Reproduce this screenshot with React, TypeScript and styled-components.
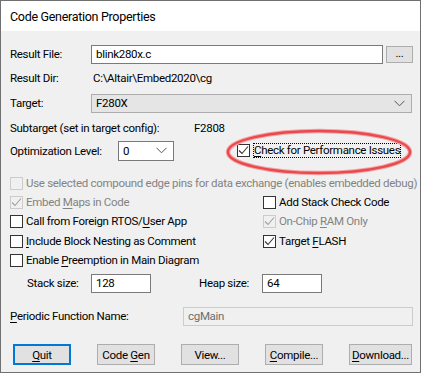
import React from "react";
import styled, { createGlobalStyle } from "styled-components";

const Global = createGlobalStyle`
  html, body { margin: 0; padding: 0; background: #3c3c3c; }
  body {
    font-family: "Roboto", "Segoe UI", sans-serif;
    font-size: 11.5px;
    letter-spacing: -0.3px;
    color: #000;
  }
  * { box-sizing: border-box; }
`;

const Window = styled.div`
  position: relative;
  width: 421px;
  height: 373px;
  border: 1px solid #707070;
  background: #f0f0f0;
  display: flex;
  flex-direction: column;
  overflow: hidden;
`;

const TitleBar = styled.div`
  height: 30px;
  background: #fff;
  display: flex;
  align-items: center;
  padding-left: 9px;
  font-size: 12.5px;
  letter-spacing: -0.3px;
`;

const Body = styled.div`
  display: flex;
  flex-direction: column;
  padding-left: 9px;
`;

const Row = styled.div<{ $mt: number; $h: number }>`
  display: flex;
  align-items: center;
  margin-top: ${(p) => p.$mt}px;
  height: ${(p) => p.$h}px;
  white-space: nowrap;
`;

const Label = styled.span<{ $w?: number; $indent?: number; $disabled?: boolean }>`
  flex: none;
  width: ${(p) => (p.$w ? `${p.$w}px` : "auto")};
  padding-left: ${(p) => p.$indent ?? 0}px;
  color: ${(p) => (p.$disabled ? "#838383" : "#000")};
`;

const TextBox = styled.div<{ $w: number; $disabled?: boolean }>`
  flex: none;
  width: ${(p) => p.$w}px;
  height: 19px;
  border: 1px solid ${(p) => (p.$disabled ? "#cccccc" : "#7a7a7a")};
  background: ${(p) => (p.$disabled ? "#f0f0f0" : "#fff")};
  color: ${(p) => (p.$disabled ? "#6d6d6d" : "#000")};
  display: flex;
  align-items: center;
  padding-left: 4px;
`;

const SmallButton = styled.div`
  flex: none;
  width: 27px;
  height: 17px;
  margin-left: 3px;
  border: 1px solid #adadad;
  background: #e1e1e1;
  display: flex;
  align-items: center;
  justify-content: center;
  padding-bottom: 3px;
`;

const Combo = styled.div<{ $w: number; $editable?: boolean }>`
  flex: none;
  width: ${(p) => p.$w}px;
  height: ${(p) => (p.$editable ? 20 : 19)}px;
  border: 1px solid ${(p) => (p.$editable ? "#7a7a7a" : "#adadad")};
  background: ${(p) => (p.$editable ? "#fff" : "#e5e5e5")};
  display: flex;
  align-items: center;
  justify-content: space-between;
  padding: 0 6px 0 4px;
`;

const Chevron = () => (
  <svg width="11" height="7" viewBox="0 0 11 7">
    <path d="M0.5 0.8 L5.5 5.8 L10.5 0.8" fill="none" stroke="#555" strokeWidth="1" />
  </svg>
);

const Grid = styled.div`
  display: grid;
  grid-template-columns: 253px 1fr;
  grid-template-rows: 20px 19px 19px 20px 19px;
  margin-top: 12px;
  white-space: nowrap;
`;

const Cell = styled.div<{ $span?: boolean }>`
  display: flex;
  align-items: center;
  grid-column: ${(p) => (p.$span ? "1 / span 2" : "auto")};
`;

const Box = styled.span<{ $disabled?: boolean }>`
  flex: none;
  width: 13px;
  height: 13px;
  border: 1px solid ${(p) => (p.$disabled ? "#cccccc" : "#333333")};
  background: ${(p) => (p.$disabled ? "#f0f0f0" : "#fff")};
  display: flex;
  align-items: center;
  justify-content: center;
  margin-right: 3px;
`;

const CheckText = styled.span<{ $disabled?: boolean; $focus?: boolean }>`
  color: ${(p) => (p.$disabled ? "#838383" : "#000")};
  outline: ${(p) => (p.$focus ? "1px dotted #000" : "none")};
  outline-offset: -1px;
  padding: ${(p) => (p.$focus ? "0 1px" : "0")};
  line-height: 15px;
`;

const U = styled.span`
  text-decoration: underline;
  text-underline-offset: 2px;
  text-decoration-thickness: 1px;
`;

const Check: React.FC<{
  checked?: boolean;
  disabled?: boolean;
  focus?: boolean;
  children: React.ReactNode;
}> = ({ checked, disabled, focus, children }) => (
  <>
    <Box $disabled={disabled}>
      {checked && (
        <svg width="11" height="11" viewBox="0 0 11 11">
          <path
            d="M1 5.5 L4 8.5 L10 1.5"
            fill="none"
            stroke={disabled ? "#a0a0a0" : "#333"}
            strokeWidth="1.1"
          />
        </svg>
      )}
    </Box>
    <CheckText $disabled={disabled} $focus={focus}>
      {children}
    </CheckText>
  </>
);

const Spacer = styled.span<{ $w: number }>`
  flex: none;
  width: ${(p) => p.$w}px;
`;

const ButtonRow = styled.div`
  display: flex;
  align-items: center;
  margin-top: 18px;
  height: 21px;
  padding-left: 3px;
  gap: 26px;
`;

const Button = styled.div<{ $w?: number; $default?: boolean }>`
  flex: none;
  width: ${(p) => p.$w ?? 58}px;
  height: 21px;
  border: ${(p) => (p.$default ? "2px solid #0078d7" : "1px solid #adadad")};
  background: #e1e1e1;
  display: flex;
  align-items: center;
  justify-content: center;
  white-space: pre;
`;

const Annotation = styled.svg`
  position: absolute;
  left: 224px;
  top: 126px;
  pointer-events: none;
`;

export default function App() {
  return (
    <>
      <Global />
      <Window>
        <TitleBar>Code Generation Properties</TitleBar>
        <Body>
          <Row $mt={13} $h={20}>
            <Label $w={81}>Result File:</Label>
            <TextBox $w={292}>blink280x.c</TextBox>
            <SmallButton>...</SmallButton>
          </Row>
          <Row $mt={6} $h={16}>
            <Label $w={83}>Result Dir:</Label>
            <span>C:\Altair\Embed2020\cg</span>
          </Row>
          <Row $mt={7} $h={20}>
            <Label $w={81}>Target:</Label>
            <Combo $w={321}>
              <span>F280X</span>
              <Chevron />
            </Combo>
          </Row>
          <Row $mt={7} $h={16}>
            <Label $w={184}>Subtarget (set in target config):</Label>
            <span>F2808</span>
          </Row>
          <Row $mt={4} $h={21}>
            <Label $w={108}>Optimization Level:</Label>
            <Combo $w={56} $editable>
              <span>0</span>
              <Chevron />
            </Combo>
            <Spacer $w={63} />
            <Check checked focus>
              <U>C</U>heck for Performance Issues
            </Check>
          </Row>
          <Grid>
            <Cell $span>
              <Check disabled>Use selected compound edge pins for data exchange (enables embedded debug)</Check>
            </Cell>
            <Cell>
              <Check checked disabled>
                Embed <U>M</U>aps in Code
              </Check>
            </Cell>
            <Cell>
              <Check>Add Stack Check Code</Check>
            </Cell>
            <Cell>
              <Check>
                Call from Foreign RTOS/<U>U</U>ser App
              </Check>
            </Cell>
            <Cell>
              <Check checked disabled>
                On-Chip <U>R</U>AM Only
              </Check>
            </Cell>
            <Cell>
              <Check>
                <U>I</U>nclude Block Nesting as Comment
              </Check>
            </Cell>
            <Cell>
              <Check checked>
                Target <U>F</U>LASH
              </Check>
            </Cell>
            <Cell $span>
              <Check>
                Enable <U>P</U>reemption in Main Diagram
              </Check>
            </Cell>
          </Grid>
          <Row $mt={3} $h={20}>
            <Label $w={81} $indent={17}>Stack size:</Label>
            <TextBox $w={60}>128</TextBox>
            <Spacer $w={48} />
            <Label $w={63}>Heap size:</Label>
            <TextBox $w={60}>64</TextBox>
          </Row>
          <Row $mt={13} $h={20}>
            <Label $w={173}>
              <U>P</U>eriodic Function Name:
            </Label>
            <TextBox $w={230} $disabled>cgMain</TextBox>
          </Row>
          <ButtonRow>
            <Button $w={58} $default>
              <span><U>Q</U>uit</span>
            </Button>
            <Button>
              <span>Code <U>G</U>en</span>
            </Button>
            <Button>View...</Button>
            <Button>
              <span><U>C</U>ompile...</span>
            </Button>
            <Button $w={63}>
              <span><U>D</U>ownload...</span>
            </Button>
          </ButtonRow>
        </Body>
        <Annotation width="188" height="50" viewBox="0 0 188 50">
          <ellipse cx="94" cy="25" rx="91" ry="21" fill="none" stroke="#f5a3a5" strokeWidth="4.5" />
          <ellipse cx="94" cy="25" rx="91" ry="21" fill="none" stroke="#e84a4e" strokeWidth="2.5" />
        </Annotation>
      </Window>
    </>
  );
}
